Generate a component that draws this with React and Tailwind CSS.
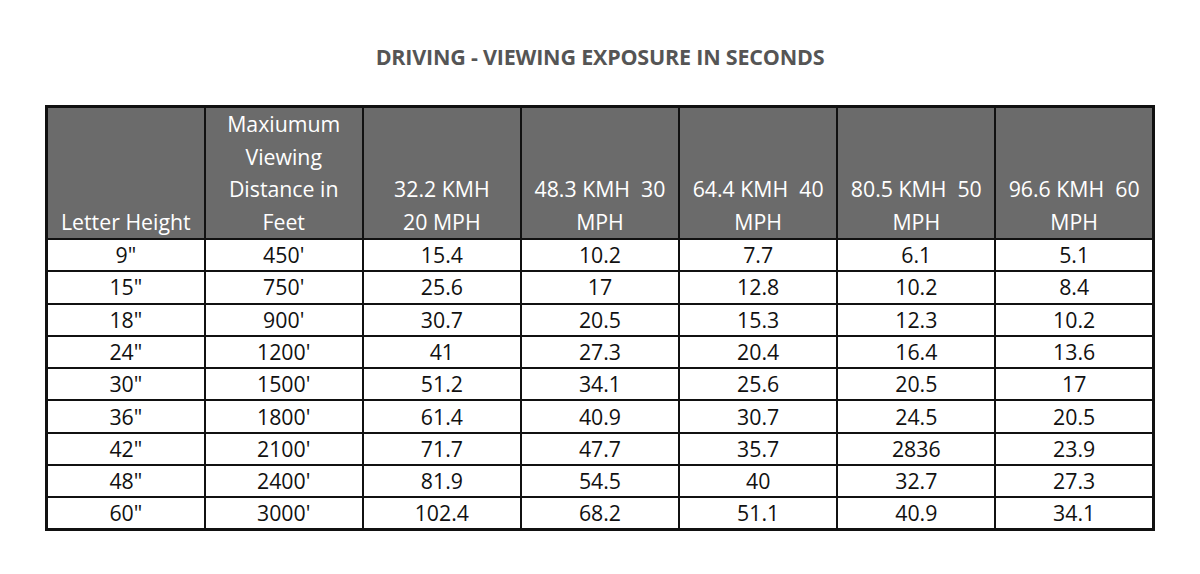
import React from "react";

const headers = [
  ["Letter Height"],
  ["Maxiumum", "Viewing", "Distance in", "Feet"],
  ["32.2 KMH", "20 MPH"],
  ["48.3 KMH  30", "MPH"],
  ["64.4 KMH  40", "MPH"],
  ["80.5 KMH  50", "MPH"],
  ["96.6 KMH  60", "MPH"],
];

const rows = [
  ['9"', "450'", "15.4", "10.2", "7.7", "6.1", "5.1"],
  ['15"', "750'", "25.6", "17", "12.8", "10.2", "8.4"],
  ['18"', "900'", "30.7", "20.5", "15.3", "12.3", "10.2"],
  ['24"', "1200'", "41", "27.3", "20.4", "16.4", "13.6"],
  ['30"', "1500'", "51.2", "34.1", "25.6", "20.5", "17"],
  ['36"', "1800'", "61.4", "40.9", "30.7", "24.5", "20.5"],
  ['42"', "2100'", "71.7", "47.7", "35.7", "2836", "23.9"],
  ['48"', "2400'", "81.9", "54.5", "40", "32.7", "27.3"],
  ['60"', "3000'", "102.4", "68.2", "51.1", "40.9", "34.1"],
];

export default function App() {
  return (
    <div
      className="w-[1200px] h-[574px] bg-white flex flex-col items-center"
      style={{ fontFamily: '"Open Sans", "Liberation Sans", sans-serif' }}
    >
      <div className="mt-[41px] h-[32px] text-[21.5px] leading-[32px] font-bold text-[#555] tracking-[-0.2px]">
        DRIVING - VIEWING EXPOSURE IN SECONDS
      </div>
      <table className="mt-[32px] w-[1110px] table-fixed border-collapse border-[3px] border-[#111]">
        <thead>
          <tr>
            {headers.map((h, i) => (
              <th
                key={i}
                className="h-[127px] align-bottom bg-[#6b6b6b] text-white font-normal text-[21.3px] leading-[32.5px] border-2 border-[#111] text-center whitespace-pre px-1 pb-0"
              >
                {h.map((l, j) => (
                  <div key={j}>{l}</div>
                ))}
              </th>
            ))}
          </tr>
        </thead>
        <tbody>
          {rows.map((r, i) => (
            <tr key={i}>
              {r.map((c, j) => (
                <td
                  key={j}
                  className="h-[32.3px] p-0 text-center text-[21.3px] leading-[28px] text-[#111] border-2 border-[#111]"
                >
                  {c}
                </td>
              ))}
            </tr>
          ))}
        </tbody>
      </table>
    </div>
  );
}
